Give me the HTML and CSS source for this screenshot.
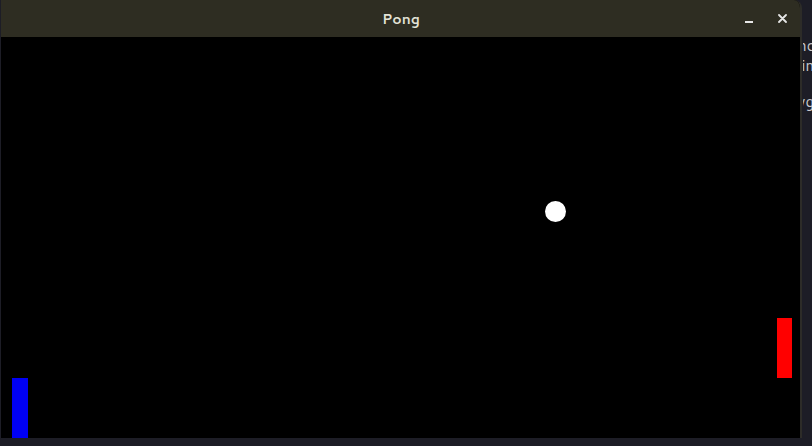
FILE: index.html
```html
<!DOCTYPE html>
<html>
<head>
<meta charset="utf-8">
<link rel="stylesheet" href="styles.css">
<title>Pong</title>
</head>
<body>
<div class="desktop">
  <div class="window">
    <div class="titlebar">
      <span class="title">Pong</span>
      <div class="controls">
        <span class="btn min"></span>
        <span class="btn close">
          <svg width="9" height="9" viewBox="0 0 9 9"><path d="M1 1L8 8M8 1L1 8" stroke="#e6e6e6" stroke-width="1.8" stroke-linecap="round"/></svg>
        </span>
      </div>
    </div>
    <div class="canvas">
      <div class="paddle left"></div>
      <div class="paddle right"></div>
      <div class="ball"></div>
    </div>
  </div>
  <div class="behind">
    <span class="l1">nc</span>
    <span class="l2">in</span>
    <span class="l3">vg</span>
  </div>
</div>
</body>
</html>
```
FILE: styles.css
```css
html, body {
  margin: 0;
  padding: 0;
  background: #1d1d26;
  overflow: hidden;
}
.desktop {
  width: 812px;
  height: 446px;
  display: flex;
  align-items: flex-start;
  font-family: "Cantarell", "Noto Sans", "DejaVu Sans", sans-serif;
}
.window {
  width: 800px;
  height: 438px;
  margin-left: 1px;
  border-right: 2px solid #2d2c28;
  border-top-right-radius: 8px;
  display: flex;
  flex-direction: column;
  background: #000;
  overflow: hidden;
}
.titlebar {
  height: 37px;
  flex: none;
  background: #2e2d22;
  display: flex;
  align-items: center;
  justify-content: center;
  position: relative;
}
.title {
  color: #e2e2d6;
  font-size: 14px;
  font-weight: 700;
  margin-left: 1px;
}
.controls {
  position: absolute;
  right: 13px;
  top: 0;
  height: 37px;
  display: flex;
  align-items: center;
  gap: 25px;
}
.btn {
  display: flex;
  align-items: center;
  justify-content: center;
}
.min {
  width: 8px;
  height: 2px;
  background: #e6e6e6;
  margin-top: 6px;
}
.close {
  width: 9px;
  height: 9px;
}
.canvas {
  flex: 1;
  background: #000;
  position: relative;
  margin-left: 1px;
}
.paddle {
  position: absolute;
  width: 16px;
  height: 60px;
}
.paddle.left {
  left: 10px;
  top: 341px;
  background: #0000f5;
}
.paddle.right {
  left: 775px;
  top: 281px;
  width: 15px;
  background: #ff0000;
}
.ball {
  position: absolute;
  left: 543px;
  top: 164px;
  width: 21px;
  height: 21px;
  border-radius: 50%;
  background: #fff;
}
.behind {
  display: flex;
  flex-direction: column;
  align-items: flex-end;
  color: #c9c9cc;
  font-size: 15px;
  margin-left: 1px;
  padding-top: 36px;
  line-height: 20px;
  width: 9px;
  overflow: hidden;
  white-space: nowrap;
}
.behind span {
  flex: none;
  margin-right: -2px;
}
.behind .l3 {
  margin-top: 16px;
}
```
